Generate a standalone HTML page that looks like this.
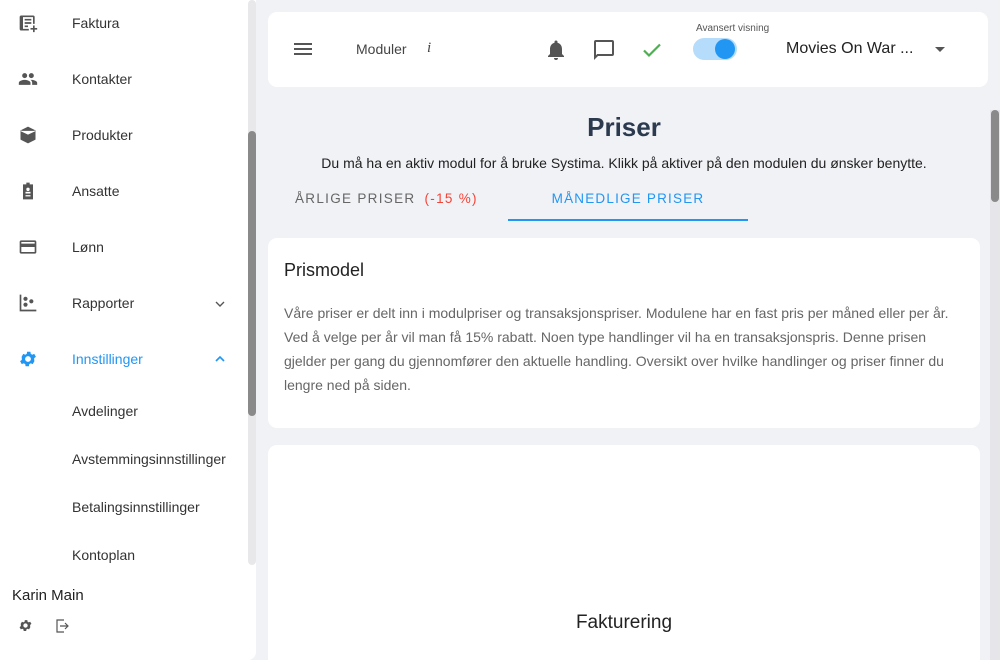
<!DOCTYPE html>
<html><head><meta charset="utf-8"><style>
*{margin:0;padding:0;box-sizing:border-box}
html,body{width:1000px;height:660px;overflow:hidden}
body{background:#f1f2f6;font-family:"Liberation Sans",sans-serif;position:relative;color:#333}
.side{position:absolute;left:0;top:0;width:256px;height:660px;background:#fff;border-radius:0 0 8px 0}
.item{position:absolute;left:0;width:248px;height:40px;font-size:14px;color:#333}
.item .ic{position:absolute;left:18px;top:10px;width:20px;height:20px}
.item .t{position:absolute;left:72px;top:12px}
.sub{position:absolute;left:72px;font-size:14px;color:#333}
.strack{position:absolute;left:248px;top:0;width:8px;height:565px;background:#e8e8ea;border-radius:4px}
.sthumb{position:absolute;left:248px;top:131px;width:8px;height:285px;background:#8a8a8a;border-radius:4px}
.card{position:absolute;background:#fff;border-radius:9px;left:268px;width:712px}
.top{top:12px;height:75px;width:720px}
.mtrack{position:absolute;left:990px;top:110px;width:10px;height:550px;background:#e6e6ea}
.mthumb{position:absolute;left:991px;top:110px;width:8px;height:92px;background:#8a8a8a;border-radius:4px}
</style></head><body>
<div class="side">
 <div class="item" style="top:3px"><svg class="ic" viewBox="0 0 24 24"><path fill="#555" d="M4 3h14a2 2 0 0 1 2 2v8h-2V5H6v14h7v2H4a2 2 0 0 1-2-2V5a2 2 0 0 1 2-2zm4 4h8v2H8zm0 4h8v2H8zm0 4h4v2H8zm10 0h2v3h3v2h-3v3h-2v-3h-3v-2h3z"/></svg><span class="t">Faktura</span></div>
 <div class="item" style="top:59px"><svg class="ic" viewBox="0 0 24 24"><path fill="#555" d="M16 11a3 3 0 1 0 0-6 3 3 0 0 0 0 6zm-8 0a3 3 0 1 0 0-6 3 3 0 0 0 0 6zm0 2c-2.3 0-7 1.2-7 3.5V19h14v-2.5C15 14.2 10.3 13 8 13zm8 0c-.3 0-.6 0-1 .1 1.2.8 2 1.9 2 3.4V19h6v-2.5c0-2.3-4.7-3.5-7-3.5z"/></svg><span class="t">Kontakter</span></div>
 <div class="item" style="top:115px"><svg class="ic" viewBox="0 0 24 24"><path fill="#555" d="M12 2l9 4.5v11L12 22l-9-4.5v-11z"/><path fill="#fff" d="M3.5 7L12 11l8.5-4" stroke="#fff" stroke-width="1"/></svg><span class="t">Produkter</span></div>
 <div class="item" style="top:171px"><svg class="ic" viewBox="0 0 24 24"><path fill="#555" d="M6 4h4V2h4v2h4v18H6z"/><circle cx="12" cy="10" r="2" fill="#fff"/><rect x="9" y="13" width="6" height="2" fill="#fff"/><rect x="9" y="17" width="6" height="1.5" fill="#fff"/></svg><span class="t">Ansatte</span></div>
 <div class="item" style="top:227px"><svg class="ic" viewBox="0 0 24 24"><path fill="#555" d="M20 4H4a2 2 0 0 0-2 2v12a2 2 0 0 0 2 2h16a2 2 0 0 0 2-2V6a2 2 0 0 0-2-2zm0 14H4v-6h16zm0-10H4V6h16z"/></svg><span class="t">Lønn</span></div>
 <div class="item" style="top:283px"><svg class="ic" viewBox="0 0 24 24"><path fill="#555" d="M2 2h2v18h18v2H2z"/><circle cx="9" cy="7" r="2.5" fill="#555"/><circle cx="9" cy="14" r="2.5" fill="#555"/><circle cx="16" cy="10" r="2.5" fill="#555"/></svg><span class="t">Rapporter</span><svg style="position:absolute;left:212px;top:13px" width="16" height="16" viewBox="0 0 24 24"><path d="M6 9l6 6 6-6" fill="none" stroke="#555" stroke-width="2"/></svg></div>
 <div class="item" style="top:339px;color:#2196f3"><svg class="ic" viewBox="0 0 24 24"><path fill="#2196f3" d="M19.4 13a7.5 7.5 0 0 0 0-2l2.1-1.6-2-3.5-2.5 1a7 7 0 0 0-1.7-1l-.4-2.6h-4l-.4 2.6a7 7 0 0 0-1.7 1l-2.5-1-2 3.5L4.6 11a7.5 7.5 0 0 0 0 2l-2.1 1.6 2 3.5 2.5-1a7 7 0 0 0 1.7 1l.4 2.6h4l.4-2.6a7 7 0 0 0 1.7-1l2.5 1 2-3.5zM12 15.5A3.5 3.5 0 1 1 12 8.5a3.5 3.5 0 0 1 0 7z"/></svg><span class="t">Innstillinger</span><svg style="position:absolute;left:212px;top:12px" width="16" height="16" viewBox="0 0 24 24"><path d="M6 15l6-6 6 6" fill="none" stroke="#2196f3" stroke-width="2.5"/></svg></div>
 <div class="sub" style="top:403px">Avdelinger</div>
 <div class="sub" style="top:451px">Avstemmingsinnstillinger</div>
 <div class="sub" style="top:499px">Betalingsinnstillinger</div>
 <div class="sub" style="top:547px">Kontoplan</div>
 <div style="position:absolute;left:12px;top:587px;font-size:15px;color:#222">Karin Main</div>
 <svg style="position:absolute;left:18px;top:618px" width="15" height="15" viewBox="0 0 24 24"><path fill="#555" d="M19.4 13a7.5 7.5 0 0 0 0-2l2.1-1.6-2-3.5-2.5 1a7 7 0 0 0-1.7-1l-.4-2.6h-4l-.4 2.6a7 7 0 0 0-1.7 1l-2.5-1-2 3.5L4.6 11a7.5 7.5 0 0 0 0 2l-2.1 1.6 2 3.5 2.5-1a7 7 0 0 0 1.7 1l.4 2.6h4l.4-2.6a7 7 0 0 0 1.7-1l2.5 1 2-3.5zM12 15.5A3.5 3.5 0 1 1 12 8.5a3.5 3.5 0 0 1 0 7z"/></svg>
 <svg style="position:absolute;left:55px;top:619px" width="14" height="14" viewBox="0 0 14 14"><path d="M9 1H2v12h7M5 7h8M10 4l3 3-3 3" fill="none" stroke="#555" stroke-width="1.2"/></svg>
 <div class="strack"></div><div class="sthumb"></div>
</div>
<div class="card top">
 <svg style="position:absolute;left:25px;top:29px" width="20" height="16" viewBox="0 0 20 16"><path d="M1 3h18M1 8h18M1 13h18" stroke="#555" stroke-width="2"/></svg>
 <span style="position:absolute;left:88px;top:29px;font-size:14px;color:#444">Moduler</span>
 <span style="position:absolute;left:159px;top:28px;font-size:15px;font-style:italic;font-family:'Liberation Serif',serif;color:#444">i</span>
 <svg style="position:absolute;left:276px;top:26px" width="24" height="24" viewBox="0 0 24 24"><path fill="#555" d="M12 22a2 2 0 0 0 2-2h-4a2 2 0 0 0 2 2zm6-6v-5c0-3-1.6-5.6-4.5-6.3V4a1.5 1.5 0 0 0-3 0v.7C7.6 5.4 6 8 6 11v5l-2 2v1h16v-1z"/></svg>
 <svg style="position:absolute;left:324px;top:26px" width="24" height="24" viewBox="0 0 24 24"><path fill="#555" d="M20 2H4a2 2 0 0 0-2 2v18l4-4h14a2 2 0 0 0 2-2V4a2 2 0 0 0-2-2zm0 14H5.2L4 17.2V4h16z"/></svg>
 <svg style="position:absolute;left:372px;top:26px" width="24" height="24" viewBox="0 0 24 24"><path d="M4 12.5l5 5L20 6.5" fill="none" stroke="#4caf50" stroke-width="2.2"/></svg>
 <span style="position:absolute;left:428px;top:11px;font-size:10px;color:#555">Avansert visning</span>
 <div style="position:absolute;left:425px;top:26px;width:44px;height:22px;background:#b5dcfb;border-radius:11px"></div>
 <div style="position:absolute;left:447px;top:27px;width:20px;height:20px;background:#2196f3;border-radius:50%"></div>
 <span style="position:absolute;left:518px;top:28px;font-size:16px;color:#222">Movies On War ...</span>
 <svg style="position:absolute;left:666px;top:34px" width="12" height="8"><path d="M1 1h10L6 6z" fill="#555"/></svg>
</div>
<div style="position:absolute;left:268px;width:712px;top:112px;text-align:center;font-size:26px;font-weight:bold;color:#2c3a4f">Priser</div>
<div style="position:absolute;left:268px;width:712px;top:155px;text-align:center;font-size:14px;color:#222">Du må ha en aktiv modul for å bruke Systima. Klikk på aktiver på den modulen du ønsker benytte.</div>
<div style="position:absolute;left:295px;top:191px;font-size:13.5px;letter-spacing:1.3px;color:#666">ÅRLIGE PRISER <span style="color:#f44336;margin-left:4px">(-15 %)</span></div>
<div style="position:absolute;left:508px;width:240px;top:191px;text-align:center;font-size:13.5px;letter-spacing:1.2px;color:#2196f3">MÅNEDLIGE PRISER</div>
<div style="position:absolute;left:508px;top:219px;width:240px;height:2px;background:#2196f3"></div>
<div class="card" style="top:238px;height:190px">
 <div style="position:absolute;left:16px;top:22px;font-size:18px;color:#222">Prismodel</div>
 <div style="position:absolute;left:16px;top:63px;width:680px;font-size:14px;line-height:24px;color:#666">Våre priser er delt inn i modulpriser og transaksjonspriser. Modulene har en fast pris per måned eller per år. Ved å velge per år vil man få 15% rabatt. Noen type handlinger vil ha en transaksjonspris. Denne prisen gjelder per gang du gjennomfører den aktuelle handling. Oversikt over hvilke handlinger og priser finner du lengre ned på siden.</div>
</div>
<div class="card" style="top:445px;height:230px">
 <div style="position:absolute;left:0;width:712px;top:167px;text-align:center;font-size:19px;color:#222">Fakturering</div>
</div>
<div class="mtrack"></div><div class="mthumb"></div>
</body></html>
